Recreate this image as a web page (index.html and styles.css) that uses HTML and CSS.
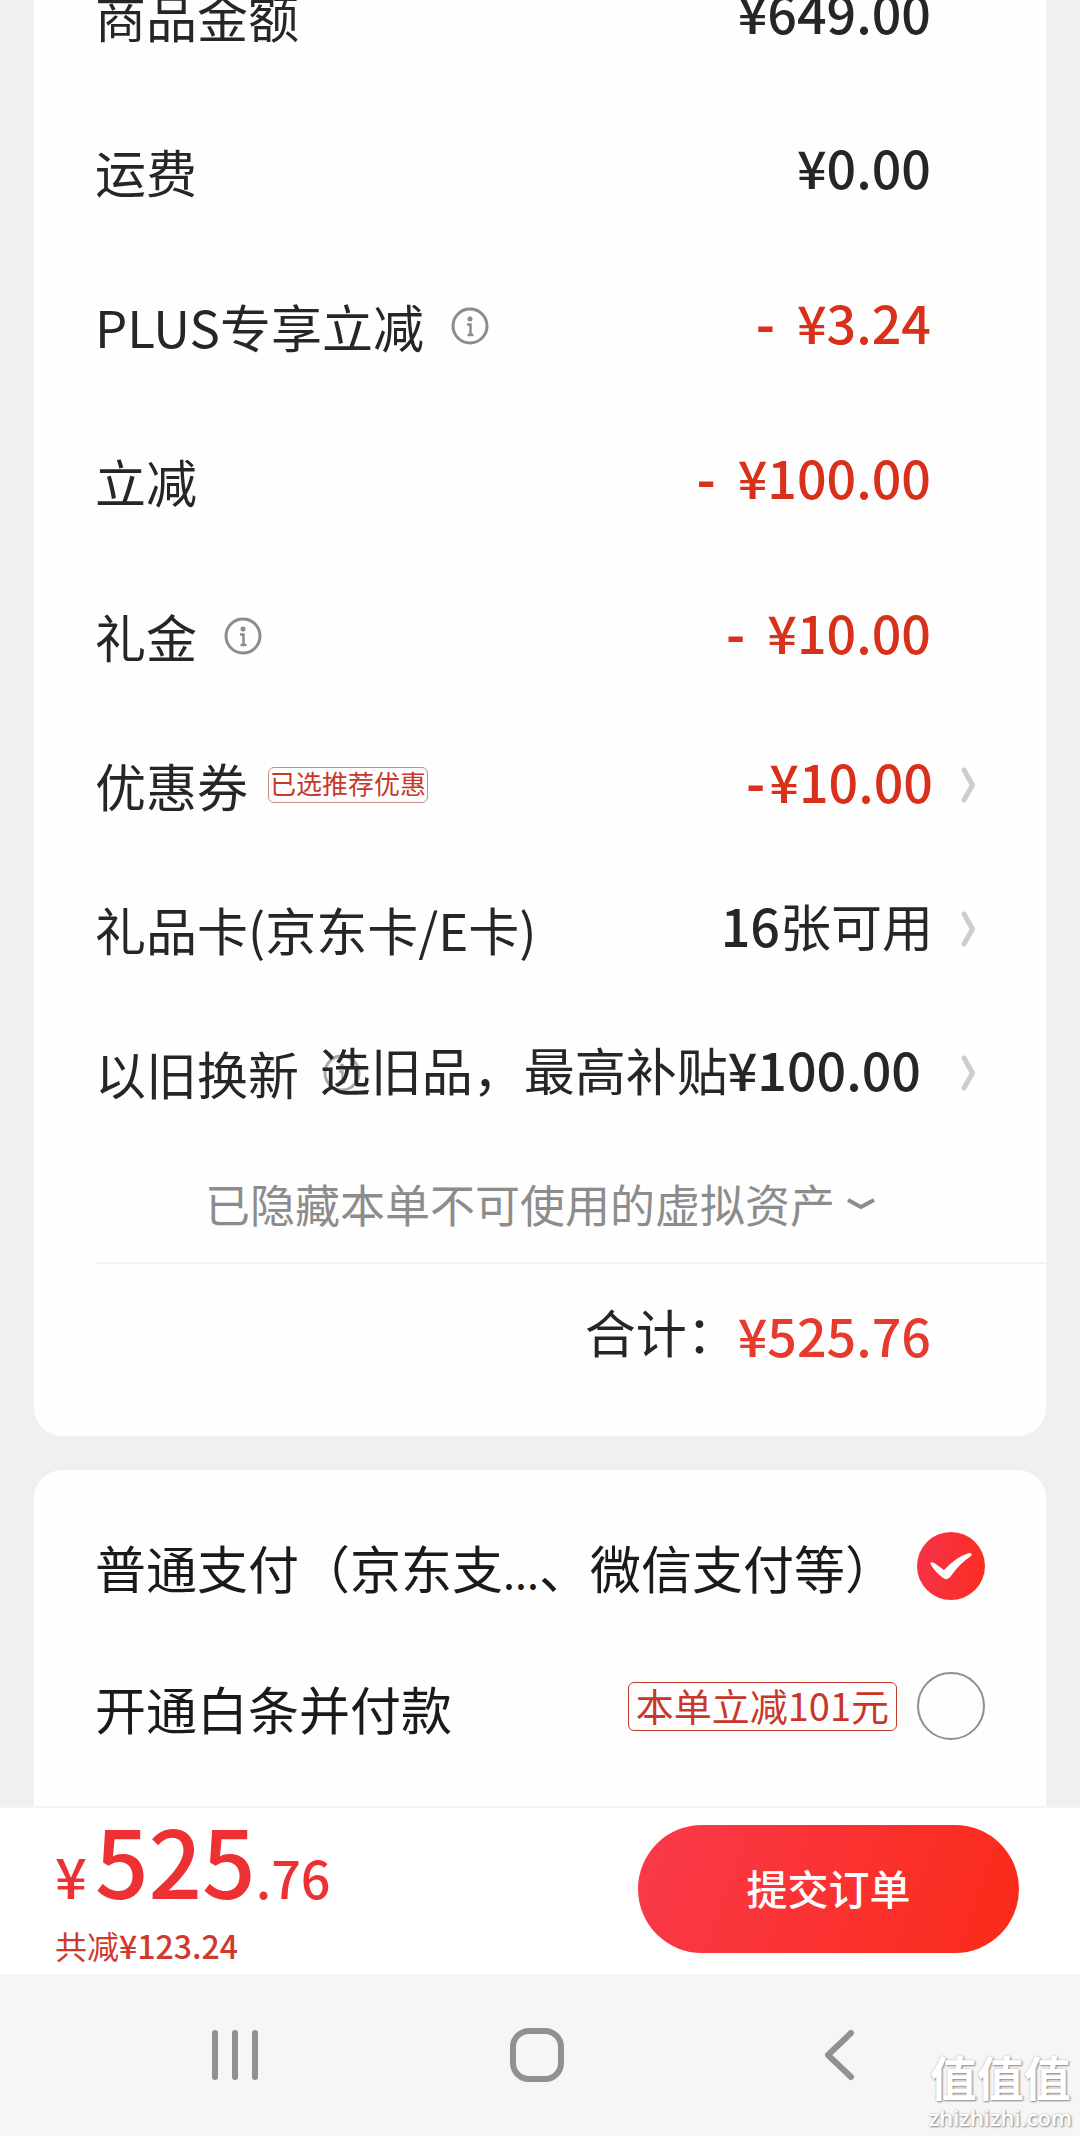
FILE: index.html
```html
<!DOCTYPE html>
<html lang="zh-CN">
<head>
<meta charset="utf-8">
<meta name="viewport" content="width=device-width, initial-scale=1">
<title>确认订单</title>
<link rel="stylesheet" href="styles.css">
</head>
<body>
<svg class="sprite" aria-hidden="true">
  <symbol id="info" viewBox="0 0 38 38">
    <circle cx="19" cy="19" r="17" fill="none" stroke="currentColor" stroke-width="3"/>
    <circle cx="19" cy="12" r="2.500" fill="currentColor"/>
    <path d="M16 17.500h3.500V28M16.500 28h6" fill="none" stroke="currentColor" stroke-width="2.500"/>
  </symbol>
  <symbol id="next" viewBox="0 0 14 36">
    <path d="M3 3l8.500 15L3 33" fill="none" stroke="currentColor" stroke-width="5" stroke-linecap="round" stroke-linejoin="round"/>
  </symbol>
</svg>

<main class="content">
  <section class="card summary">
    <ul class="rows rows-tall">
      <li class="row"><span class="label">商品金额</span><span class="amount">¥649.00</span></li>
      <li class="row"><span class="label">运费</span><span class="amount">¥0.00</span></li>
      <li class="row">
        <span class="label">PLUS专享立减<button class="info" type="button" aria-label="说明"><svg><use href="#info"/></svg></button></span>
        <span class="amount red"><span class="minus spaced">-</span>¥3.24</span>
      </li>
      <li class="row"><span class="label">立减</span><span class="amount red"><span class="minus spaced">-</span>¥100.00</span></li>
      <li class="row">
        <span class="label">礼金<button class="info" type="button" aria-label="说明"><svg><use href="#info"/></svg></button></span>
        <span class="amount red"><span class="minus spaced">-</span>¥10.00</span>
      </li>
    </ul>
    <ul class="rows rows-link">
      <li><a class="row" href="#coupon">
        <span class="label">优惠券<span class="tag tag-small">已选推荐优惠</span></span>
        <span class="amount red"><span class="minus">-</span>¥10.00</span>
        <svg class="next"><use href="#next"/></svg>
      </a></li>
      <li><a class="row" href="#giftcard">
        <span class="label">礼品卡(京东卡/E卡)</span>
        <span class="amount">16<span class="words">张可用</span></span>
        <svg class="next"><use href="#next"/></svg>
      </a></li>
      <li><a class="row" href="#tradein">
        <span class="label">以旧换新<span class="info info-faint"><svg><use href="#info"/></svg></span></span>
        <span class="amount offer"><span class="words">选旧品，最高补贴</span>¥100.00</span>
        <svg class="next"><use href="#next"/></svg>
      </a></li>
    </ul>
    <button class="hidden-note" type="button">已隐藏本单不可使用的虚拟资产
      <svg class="down" viewBox="0 0 28 14"><path d="M1 3l13 7 13-7" fill="none" stroke="currentColor" stroke-width="4"/></svg>
    </button>
    <p class="total"><span class="total-name">合计：</span><span class="total-sum">¥525.76</span></p>
  </section>

  <section class="card payment">
    <div class="pay-row">
      <label class="pay-name" for="pay-normal">普通支付（京东支<span class="dots">...</span>、微信支付等）</label>
      <span class="pick">
        <input id="pay-normal" type="radio" name="pay" checked>
        <svg viewBox="0 0 68 68" aria-hidden="true"><path d="M13 31q3-2 7 2l7 5q12-13 25-17 4 0 2 3-12 8-20 20-4 6-9 1-8-6-12-14z" fill="#fff"/></svg>
      </span>
    </div>
    <div class="pay-row">
      <label class="pay-name" for="pay-baitiao">开通白条并付款</label>
      <span class="tag tag-large">本单立减101元</span>
      <span class="pick"><input id="pay-baitiao" type="radio" name="pay"></span>
    </div>
  </section>
</main>

<footer class="submit-bar">
  <div>
    <p class="price"><span>¥</span><strong>525</strong><span class="cents">.76</span></p>
    <p class="saved">共减<b>¥123.24</b></p>
  </div>
  <button class="submit" type="button">提交订单</button>
</footer>

<nav class="system-nav">
  <button type="button" aria-label="最近任务"><svg viewBox="0 0 56 56"><path d="M8 6v44M28 6v44M48 6v44"/></svg></button>
  <button type="button" aria-label="主屏幕"><svg viewBox="0 0 56 56"><rect x="4" y="4" width="48" height="48" rx="16"/></svg></button>
  <button type="button" aria-label="返回"><svg viewBox="0 0 56 56"><path d="M40 6L17 28l23 22"/></svg></button>
  <div class="watermark"><span class="mark">值值值</span><span class="site">zhizhizhi.com</span></div>
</nav>
</body>
</html>
```

FILE: styles.css
```css
* { box-sizing: border-box; margin: 0; padding: 0; }

body {
  display: flex;
  flex-direction: column;
  min-height: 100vh;
  background: #f0f0f0;
  color: #262626;
  font-family: "Noto Sans CJK SC", sans-serif;
  font-size: 51px;
  line-height: 72px;
}

button { border: 0; background: none; color: inherit; font: inherit; }
ul { list-style: none; }
a { color: inherit; text-decoration: none; }
.sprite { display: none; }

.content {
  flex: 1;
  display: flex;
  flex-direction: column;
  gap: 34px;
  padding: 0 34px;
  overflow: hidden;
}

.card { background: #fefefe; }

/* The page is scrolled: the first row runs off the top edge. */
.summary {
  margin-top: -62px;
  border-radius: 0 0 28px 28px;
  padding-left: 61px;
}

.row { display: flex; align-items: center; padding-right: 71px; }
.rows-tall .row { height: 155px; padding-right: 115px; }
.rows-link .row { height: 144px; }

.label {
  flex: 1 1 0;
  min-width: 0;
  display: flex;
  align-items: center;
  white-space: nowrap;
}

.info {
  flex: none;
  display: flex;
  width: 38px;
  height: 38px;
  margin-left: 27px;
  color: #8c8c8c;
}
.info svg { width: 38px; height: 38px; }
.info-faint { margin-left: 24px; color: #aaa; }

.amount {
  position: relative;
  padding-bottom: 8px;
  font-size: 52px;
  font-weight: 500;
  white-space: nowrap;
}
.rows-link .amount { margin-right: 28px; }
.rows-link .offer { margin-right: 40px; }
.words { font-size: 51px; font-weight: 400; }
.minus { margin-right: 4px; font-weight: 700; }
.spaced { margin-right: 22px; }
.red { color: #d9301c; }
.next { flex: none; width: 14px; height: 36px; color: #ccc; }

.tag {
  flex: none;
  border: 1px solid #c0392b;
  border-radius: 6px;
  color: #c8372a;
  white-space: nowrap;
}
.tag-small {
  margin-left: 20px;
  padding: 0 1px 4px;
  border-color: #c98d86;
  font-size: 26px;
  line-height: 30px;
}
.tag-large {
  margin-right: 20px;
  padding: 0 7px 4px;
  font-size: 38px;
  line-height: 43px;
}

.hidden-note {
  display: flex;
  align-items: center;
  gap: 12px;
  width: 100%;
  height: 117px;
  padding-left: 110px;
  color: #8c8c8c;
  font-size: 45px;
}
.down { width: 28px; height: 14px; }

.total {
  display: flex;
  align-items: center;
  justify-content: flex-end;
  height: 174px;
  padding: 0 115px 30px 0;
  border-top: 2px solid #f2f2f2;
}
.total-name { padding-bottom: 8px; }
.total-sum { color: #e53a2c; font-size: 52px; font-weight: 500; }

.payment {
  flex: 1;
  padding: 26px 61px 30px 61px;
  border-radius: 28px 28px 0 0;
}
.pay-row { display: flex; align-items: center; height: 140px; }
.pay-name { flex: 1; padding-top: 4px; color: #1a1a1a; white-space: nowrap; }
.dots { font-size: 43px; }
.pick { flex: none; display: grid; }
.pick input, .pick svg { grid-area: 1 / 1; width: 68px; height: 68px; }
.pick svg { pointer-events: none; }
.pick input {
  appearance: none;
  border: 2px solid #8f8f8f;
  border-radius: 50%;
}
.pick input:checked {
  border: 0;
  background: linear-gradient(100deg, #f5334a, #fc2c20);
}

.submit-bar {
  display: flex;
  align-items: center;
  justify-content: space-between;
  height: 168px;
  padding: 0 61px 4px 55px;
  border-top: 2px solid #f4f4f4;
  background: #fff;
}
.price {
  display: flex;
  align-items: baseline;
  color: #ec3033;
  font-size: 56px;
  font-weight: 500;
  line-height: 92px;
}
.price strong { margin-left: 8px; font-size: 94px; font-weight: 500; }
.price .cents { font-size: 52px; }
.saved { color: #cf3a2b; font-size: 32px; line-height: 44px; }
.saved b { font-weight: 500; }
.submit {
  width: 381px;
  height: 128px;
  padding-bottom: 4px;
  border-radius: 64px;
  background: linear-gradient(110deg, #f93a4b, #fb2a18);
  color: #fff;
  font-size: 41px;
  font-weight: 500;
}

.system-nav {
  position: relative;
  display: flex;
  align-items: center;
  justify-content: center;
  gap: 246px;
  height: 162px;
  padding-right: 6px;
  background: #f6f6f6;
}
.system-nav button { width: 56px; height: 56px; }
.system-nav svg {
  display: block;
  fill: none;
  stroke: #919191;
  stroke-width: 6;
  stroke-linecap: round;
  stroke-linejoin: round;
}

.watermark {
  position: absolute;
  right: 8px;
  bottom: 6px;
  display: flex;
  flex-direction: column;
  align-items: center;
  color: #fff;
  text-shadow: 1px 1px 2px #888, 0 0 2px #bbb;
}
.mark { font-size: 47px; font-weight: 700; line-height: 56px; }
.site { font-family: "Open Sans", sans-serif; font-size: 22px; font-weight: 600; line-height: 26px; }
```
